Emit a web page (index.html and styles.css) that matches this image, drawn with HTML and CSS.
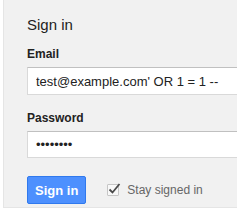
FILE: index.html
```html
<!DOCTYPE html>
<html>
<head>
<meta charset="utf-8">
<link rel="stylesheet" href="styles.css">
</head>
<body>
<div class="panel">
  <h2 class="title">Sign in</h2>
  <label class="label label-email" for="email">Email</label>
  <input class="field" id="email" type="text" value="test@example.com' OR 1 = 1 --">
  <label class="label label-pass" for="pass">Password</label>
  <input class="field field-pass" id="pass" type="password" value="password">
  <div class="actions">
    <button class="btn" type="button">Sign in</button>
    <span class="check">
      <svg width="15" height="14" viewBox="0 0 15 14">
        <path d="M2.5 7.5 L5.5 10.5 L12.5 2" fill="none" stroke="#4a4a4a" stroke-width="1.8"/>
      </svg>
    </span>
    <span class="stay">Stay signed in</span>
  </div>
</div>
</body>
</html>
```
FILE: styles.css
```css
html, body {
  margin: 0;
  padding: 0;
  background: #fff;
  overflow: hidden;
}
body {
  width: 237px;
  height: 213px;
  font-family: "Liberation Sans", Arial, sans-serif;
  color: #222;
}
.panel {
  margin-left: 3px;
  width: 234px;
  height: 208px;
  box-sizing: border-box;
  overflow: hidden;
  background: #f1f1f1;
  border-left: 1px solid #e5e5e5;
  border-bottom: 1px solid #e5e5e5;
  padding: 16px 0 0 23px;
  display: flex;
  flex-direction: column;
  align-items: flex-start;
}
.title {
  margin: 0;
  font-size: 15px;
  line-height: 18px;
  font-weight: normal;
  color: #222;
}
.label {
  display: block;
  font-size: 12px;
  line-height: 14px;
  font-weight: bold;
  color: #222;
}
.label-email {
  margin-top: 13px;
}
.label-pass {
  margin-top: 16px;
}
.field {
  margin: 6px 0 0 0;
  width: 240px;
  flex-shrink: 0;
  height: 28px;
  box-sizing: border-box;
  border: 1px solid #d9d9d9;
  border-top-color: #c0c0c0;
  background: #fff;
  padding: 0 8px;
  font-family: "Liberation Sans", Arial, sans-serif;
  font-size: 13px;
  color: #222;
  outline: none;
}
.field-pass {
  height: 27px;
}
.actions {
  margin-top: 18px;
  display: flex;
  align-items: center;
}
.btn {
  height: 28px;
  box-sizing: border-box;
  padding: 0 7px;
  border: 1px solid #3079ed;
  border-radius: 2px;
  background: #4d90fe;
  color: #fff;
  font-family: "Liberation Sans", Arial, sans-serif;
  font-size: 13px;
  font-weight: bold;
}
.check {
  position: relative;
  margin-left: 21px;
  width: 12px;
  height: 12px;
  box-sizing: border-box;
  border: 1px solid #c6c6c6;
  border-radius: 1px;
  background: #f8f8f8;
}
.check svg {
  position: absolute;
  left: -1px;
  top: -3px;
}
.stay {
  margin-left: 8px;
  font-size: 12px;
  color: #666;
}
```
